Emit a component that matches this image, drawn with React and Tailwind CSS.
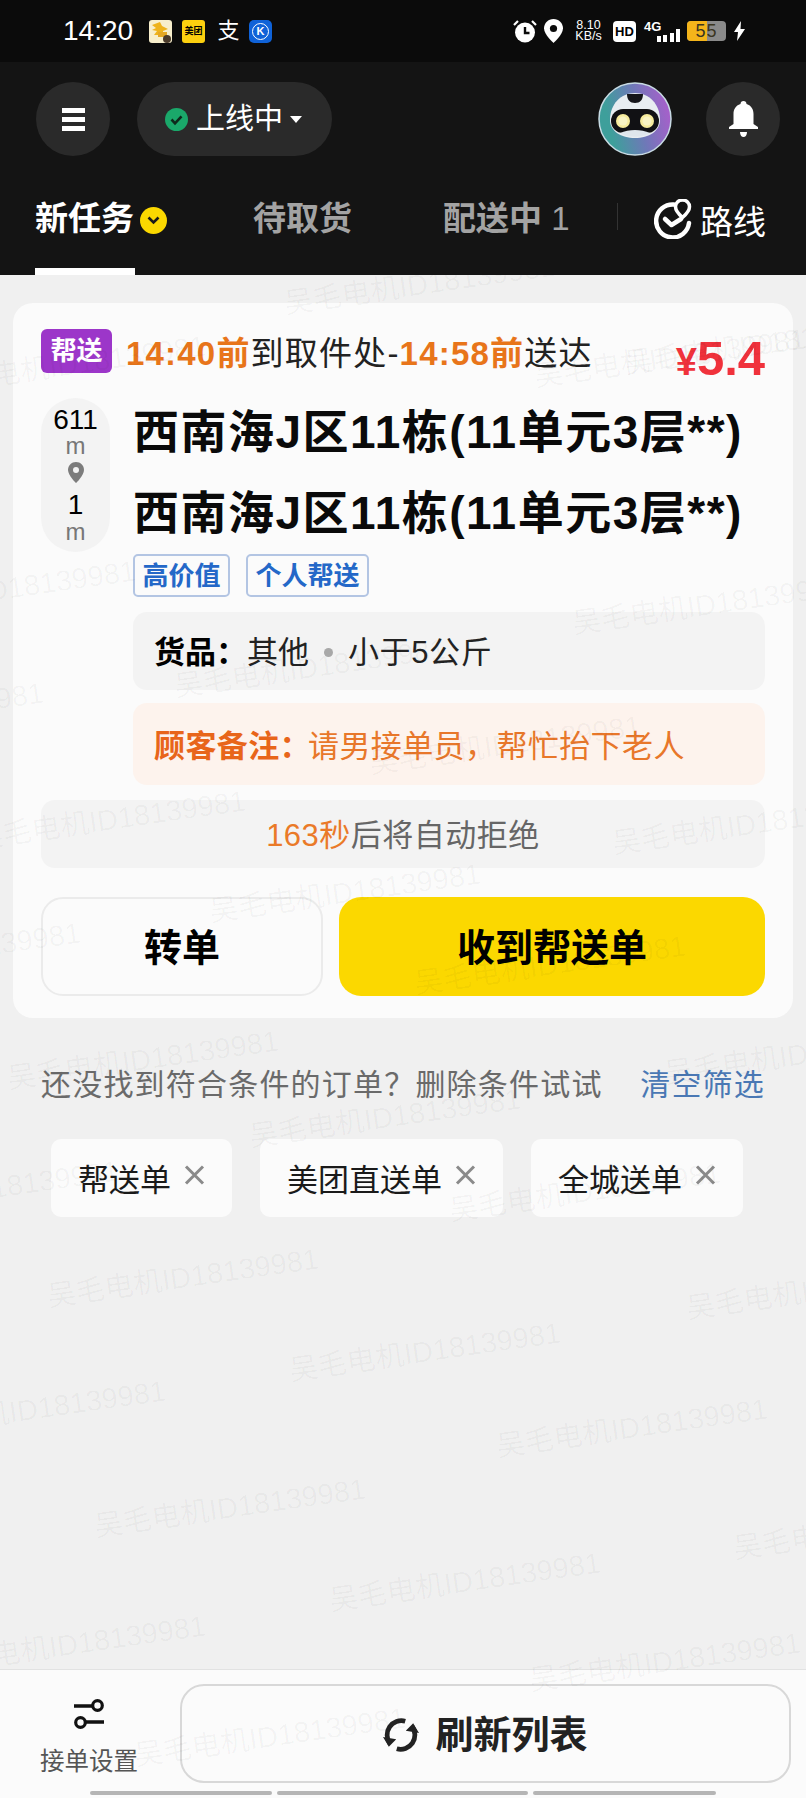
import { Fragment } from 'react'

const WATERMARKS = [
  [420, 285], [670, 358], [70, 365], [760, 345], [708, 605], [0, 590], [310, 668], [505, 745],
  [-92, 712], [110, 820], [748, 825], [345, 893], [-55, 952], [550, 965], [143, 1060], [385, 1118],
  [800, 1055], [585, 1192], [-17, 1190], [183, 1278], [425, 1352], [822, 1290], [632, 1428], [230, 1508],
  [30, 1410], [465, 1582], [869, 1530], [70, 1645], [665, 1662], [270, 1737],
]

function Watermarks() {
  return (
    <div className="absolute inset-x-0 top-[275px] bottom-0 overflow-hidden pointer-events-none">
      {WATERMARKS.map(([x, y]) => (
        <span
          key={`${x}-${y}`}
          className="absolute -translate-x-1/2 -translate-y-1/2 -rotate-[8deg] whitespace-nowrap text-[29px] leading-none text-black/[0.035]"
          style={{ left: x, top: y - 275 }}
        >
          吴毛电机ID18139981
        </span>
      ))}
    </div>
  )
}

function StatusBar() {
  return (
    <div className="flex h-[62px] shrink-0 items-center bg-[#0b0b0b] pl-[63px] text-white">
      <span className="w-[86px] text-[28px] leading-none font-light">14:20</span>
      {/* app notifications */}
      <svg width="23" height="23" viewBox="0 0 23 23" className="mr-[10px]">
        <rect width="23" height="23" rx="3" fill="#f7eecb" />
        <path d="M3 5l8-3 2 4 6 3-5 2v4H5l3-4-5-1 4-2z" fill="#eeb31c" />
        <rect x="9" y="12" width="9" height="5" fill="#e5a824" />
        <circle cx="18" cy="19" r="4" fill="#4a3a2a" />
      </svg>
      <span className="mr-[12px] flex h-[23px] w-[23px] items-center justify-center rounded-[3px] bg-[#fcd00f] text-[9px] leading-none font-bold text-black">美团</span>
      <span className="mr-[9px] w-[23px] text-center text-[22px] leading-none">支</span>
      <span className="flex h-[23px] w-[23px] items-center justify-center rounded-[5px] bg-[#0f62d8]">
        <span className="flex h-[17px] w-[17px] items-center justify-center rounded-full border border-white text-[11px] leading-none font-bold">K</span>
      </span>

      <div className="ml-[241px] flex items-center">
        <svg width="24" height="24" viewBox="0 0 24 24" className="mr-[7px]">
          <circle cx="12" cy="13.5" r="10" fill="#fff" />
          <path d="M12 8v6h4.5" fill="none" stroke="#0b0b0b" strokeWidth="2.4" />
          <path d="M1 6l4-4M23 6l-4-4" stroke="#fff" strokeWidth="2.2" />
        </svg>
        <svg width="19" height="24" viewBox="0 0 19 24" className="mr-[12px]">
          <path d="M9.5 0C4.2 0 0 4.1 0 9.3 0 15.5 9.5 24 9.5 24S19 15.5 19 9.3C19 4.1 14.8 0 9.5 0z" fill="#fff" />
          <circle cx="9.5" cy="9.5" r="3.6" fill="#0b0b0b" />
        </svg>
        <div className="mr-[11px] flex w-[27px] flex-col items-center text-[12.5px] leading-[11px]">
          <span>8.10</span>
          <span>KB/s</span>
        </div>
        <span className="mr-[8px] flex h-[21px] w-[23px] items-center justify-center rounded-[4px] bg-white text-[13px] leading-none font-bold text-black">HD</span>
        <div className="relative mr-[7px] h-[22px] w-[36px]">
          <span className="absolute top-0 left-0 text-[13px] leading-none font-bold">4G</span>
          <div className="absolute right-0 bottom-0 flex items-end gap-[2.5px]">
            <span className="h-[6px] w-[4px] bg-white" />
            <span className="h-[7px] w-[4px] bg-white" />
            <span className="h-[9px] w-[4px] bg-white" />
            <span className="h-[13px] w-[4px] bg-white" />
          </div>
        </div>
        <div className="relative mr-[8px] flex h-[20px] w-[39px] overflow-hidden rounded-[4px] bg-[#8a8a8a]">
          <span className="w-[20px] bg-[#f4b41a]" />
          <span className="absolute inset-0 text-center text-[18px] leading-[20px] tracking-[1px] text-[#3b3520]">55</span>
        </div>
        <svg width="11" height="20" viewBox="0 0 11 20">
          <path d="M7 0L0 11h4l-1 9 8-12H6.5z" fill="#fff" />
        </svg>
      </div>
    </div>
  )
}

function RobotAvatar() {
  return (
    <svg width="74" height="74" viewBox="0 0 74 74">
      <defs>
        <linearGradient id="robotBg" x1="0.1" y1="0.4" x2="0.95" y2="0.2">
          <stop offset="0" stopColor="#3e9f9b" />
          <stop offset="0.5" stopColor="#6f78b8" />
          <stop offset="1" stopColor="#a85fcb" />
        </linearGradient>
      </defs>
      <circle cx="37" cy="37" r="36" fill="url(#robotBg)" stroke="#c8dbe4" strokeWidth="1.5" />
      <path d="M12 38c0-16 11-27 25-27s25 11 25 27c0 11-11 18-25 18S12 49 12 38z" fill="#e8edf1" />
      <path d="M29 12h16c0 6-3 9-8 9s-8-3-8-9z" fill="#15151a" />
      <rect x="13" y="27" width="48" height="24" rx="12" fill="#111114" />
      <circle cx="25" cy="39" r="7" fill="#f6eb9c" />
      <circle cx="25" cy="39" r="4.5" fill="#f9f4c4" />
      <circle cx="49" cy="39" r="7" fill="#f6eb9c" />
      <circle cx="49" cy="39" r="4.5" fill="#f9f4c4" />
      <path d="M22 51c9-4 21-4 30 0-8 5-22 5-30 0z" fill="#dfe6ec" />
    </svg>
  )
}

function TopBar() {
  return (
    <div className="flex items-center pt-[20px] pr-[26px] pl-[36px]">
      <button className="flex h-[74px] w-[74px] flex-col items-center justify-center gap-[4px] rounded-full bg-[#2a2a2a]">
        <span className="h-[5px] w-[23px] bg-white" />
        <span className="h-[5px] w-[23px] bg-white" />
        <span className="h-[5px] w-[23px] bg-white" />
      </button>
      <div className="ml-[27px] flex h-[74px] w-[195px] items-center rounded-full bg-[#2a2a2a] pl-[28px]">
        <svg width="23" height="23" viewBox="0 0 23 23">
          <circle cx="11.5" cy="11.5" r="11.5" fill="#1aa86a" />
          <path d="M6.5 11.5l3.5 3.8 6.5-7" fill="none" stroke="#0e2a1c" strokeWidth="2.6" />
        </svg>
        <span className="ml-[8px] text-[29px] leading-none text-white">上线中</span>
        <span className="ml-[7px] h-0 w-0 border-x-[6.5px] border-t-[7px] border-x-transparent border-t-white" />
      </div>
      <div className="ml-auto">
        <RobotAvatar />
      </div>
      <button className="ml-[34px] flex h-[74px] w-[74px] items-center justify-center rounded-full bg-[#2a2a2a]">
        <svg width="29" height="36" viewBox="0 0 29 36">
          <path d="M14.5 0c1.8 0 3 1.2 3 3 5 1.5 7 5.5 7 10v10l4.5 3v2H0v-2l4.5-3V13c0-4.5 2-8.5 7-10 0-1.8 1.2-3 3-3z" fill="#fff" />
          <path d="M11 31h7c0 3-1.5 5-3.5 5S11 34 11 31z" fill="#fff" />
        </svg>
      </button>
    </div>
  )
}

function Tabs() {
  return (
    <div className="flex h-[119px] items-start pt-[40px] pl-[35px]">
      <div className="relative flex h-[79px] items-start">
        <span className="w-[100px] text-[33px] leading-[46px] font-bold text-white">新任务</span>
        <span className="absolute top-[11px] left-[105px] flex h-[27px] w-[27px] items-center justify-center rounded-full bg-[#fbd800]">
          <svg width="13" height="9" viewBox="0 0 13 9">
            <path d="M1.5 1.5l5 5 5-5" fill="none" stroke="#1a1a1a" strokeWidth="2.6" />
          </svg>
        </span>
        <span className="absolute bottom-0 left-0 h-[7px] w-[100px] bg-white" />
      </div>
      <span className="ml-[118px] w-[100px] text-[33px] leading-[46px] font-bold text-[#a3a3a3]">待取货</span>
      <span className="ml-[90px] w-[130px] text-[33px] leading-[46px] font-bold text-[#a3a3a3]">
        配送中 <span className="font-normal">1</span>
      </span>
      <span className="mt-[7px] ml-[44px] h-[27px] w-px bg-[#333333]" />
      <svg width="38" height="40" viewBox="0 0 38 40" className="mt-[3px] ml-[36px]">
        <path d="M20 5.5A16.5 16.5 0 1 0 35 24" fill="none" stroke="#fff" strokeWidth="4.5" strokeLinecap="round" />
        <path d="M11 20l6.5 6 9.5-6" fill="none" stroke="#fff" strokeWidth="4.5" strokeLinecap="round" strokeLinejoin="round" />
        <path d="M28.5 1c-4 0-7 3-7 6.8 0 4.6 7 10.7 7 10.7s7-6.1 7-10.7c0-3.8-3-6.8-7-6.8z" fill="#141414" stroke="#fff" strokeWidth="3.5" />
      </svg>
      <span className="mt-[4px] ml-[8px] text-[33px] leading-[46px] text-white">路线</span>
    </div>
  )
}

function DistancePill() {
  return (
    <div className="flex h-[154px] w-[69px] shrink-0 flex-col items-center rounded-full bg-[#f3f3f3] pt-[8px] text-[#777777]">
      <span className="text-[28px] leading-[28px] font-medium text-black">611</span>
      <span className="text-[24px] leading-[24px]">m</span>
      <svg width="16" height="21" viewBox="0 0 16 21" className="mt-[4px]">
        <path d="M8 0C3.6 0 0 3.5 0 7.9 0 13.3 8 21 8 21s8-7.7 8-13.1C16 3.5 12.4 0 8 0z" fill="#7c7c7c" />
        <circle cx="8" cy="8" r="3" fill="#f3f3f3" />
      </svg>
      <span className="mt-[7px] text-[28px] leading-[30px] font-medium text-black">1</span>
      <span className="text-[24px] leading-[24px]">m</span>
    </div>
  )
}

function Address() {
  return (
    <div className="h-[68px] text-[46px] leading-[68px] font-bold tracking-[1.5px] whitespace-nowrap text-[#0a0a0a]">
      西南海J区11栋(11单元3层**)
    </div>
  )
}

function OrderCard() {
  return (
    <div className="mx-[13px] rounded-[20px] bg-[#fbfbfb] px-[28px] pt-[26px] pb-[22px]">
      <div className="flex h-[44px] items-center">
        <span className="flex h-[44px] w-[71px] items-center justify-center rounded-[6px] bg-[#9c36c9] text-[26px] leading-none font-bold text-white">帮送</span>
        <div className="mt-[6px] ml-[14px] text-[33px] leading-[44px] tracking-[1.2px] whitespace-nowrap text-[#222222]">
          <span className="font-bold text-[#e8751a]">14:40前</span>
          到取件处-
          <span className="font-bold text-[#e8751a]">14:58前</span>
          送达
        </div>
        <div className="mt-[14px] ml-auto leading-none font-bold whitespace-nowrap text-[#f0323c]">
          <span className="text-[38px]">¥</span>
          <span className="text-[49px]">5.4</span>
        </div>
      </div>

      <div className="mt-[25px] flex">
        <DistancePill />
        <div className="ml-[23px] flex min-w-0 flex-1 flex-col">
          <Address />
          <div className="mt-[13px]">
            <Address />
          </div>
          <div className="mt-[7px] flex gap-[16px]">
            <span className="flex h-[43px] w-[97px] items-center justify-center rounded-[5px] border-2 border-[#b3c5e3] text-[26px] leading-none font-bold text-[#2468c8]">高价值</span>
            <span className="flex h-[43px] w-[123px] items-center justify-center rounded-[5px] border-2 border-[#b3c5e3] text-[26px] leading-none font-bold text-[#2468c8]">个人帮送</span>
          </div>
          <div className="mt-[15px] flex h-[78px] items-center rounded-[14px] bg-[#f3f3f3] pt-[2px] pl-[21px] text-[31px] leading-none text-[#222222]">
            <span className="font-bold text-black">货品：</span>
            <span>其他</span>
            <span className="mx-[15px] h-[9px] w-[9px] rounded-full bg-[#a8a8a8]" />
            <span className="tracking-[0.6px]">小于5公斤</span>
          </div>
          <div className="mt-[13px] flex h-[82px] items-center rounded-[14px] bg-[#fdf3ed] pt-[4px] pl-[21px] text-[31px] leading-none tracking-[0.4px] whitespace-nowrap text-[#e8772a]">
            <span className="font-bold text-[#e8651a]">顾客备注：</span>
            <span className="-ml-[3px]">请男接单员，帮忙抬下老人</span>
          </div>
        </div>
      </div>

      <div className="mt-[15px] flex h-[68px] items-center justify-center rounded-[14px] bg-[#f3f3f3] pt-[2px] text-[31px] leading-none tracking-[0.5px] text-[#666666]">
        <span className="text-[#ea7a28]">163秒</span>
        后将自动拒绝
      </div>

      <div className="mt-[29px] flex gap-[16px]">
        <button className="flex h-[99px] w-[282px] items-center justify-center rounded-[22px] border-2 border-[#ebebeb] bg-[#fbfbfb] pt-[2px] text-[38px] leading-none font-bold text-black">转单</button>
        <button className="flex h-[99px] flex-1 items-center justify-center rounded-[22px] bg-[#fbd800] pt-[2px] text-[38px] leading-none font-bold text-black">收到帮送单</button>
      </div>
    </div>
  )
}

function FilterChip({ label }) {
  return (
    <div className="flex h-[78px] items-center rounded-[10px] bg-[#fbfbfb] pt-[4px] pr-[27px] pl-[27px] text-[31px] leading-none whitespace-nowrap text-[#1a1a1a]">
      {label}
      <svg width="21" height="20" viewBox="0 0 21 20" className="-mt-[10px] ml-[13px]">
        <path d="M2 1.5l17 17M19 1.5l-17 17" stroke="#8a8a8a" strokeWidth="3" />
      </svg>
    </div>
  )
}

function EmptyFilters() {
  return (
    <Fragment>
      <div className="mx-[41px] mt-[46px] flex items-center justify-between text-[30px] leading-[42px] tracking-[1.2px]">
        <span className="text-[#6a6a6a]">还没找到符合条件的订单？删除条件试试</span>
        <span className="text-[#4a78b4]">清空筛选</span>
      </div>
      <div className="mt-[33px] ml-[51px] flex gap-[28px]">
        <FilterChip label="帮送单" />
        <FilterChip label="美团直送单" />
        <FilterChip label="全城送单" />
      </div>
    </Fragment>
  )
}

function BottomBar() {
  return (
    <div className="shrink-0 border-t border-[#e2e2e2] bg-[#fbfbfb] pt-[14px]">
      <div className="flex pr-[15px]">
        <div className="flex w-[180px] flex-col items-center pt-[15px] pr-[2px]">
          <svg width="30" height="30" viewBox="0 0 30 30">
            <path d="M0 7h19M30 23H11" stroke="#111" strokeWidth="3.6" />
            <circle cx="23.5" cy="6.5" r="4.8" fill="none" stroke="#111" strokeWidth="3.2" />
            <circle cx="6.5" cy="23.5" r="4.8" fill="none" stroke="#111" strokeWidth="3.2" />
          </svg>
          <span className="mt-[21px] text-[24.5px] leading-none whitespace-nowrap text-[#555555]">接单设置</span>
        </div>
        <button className="flex h-[99px] flex-1 items-center justify-center rounded-[24px] border-2 border-[#d8d8d8] pt-[2px]">
          <svg width="36" height="36" viewBox="0 0 34 34">
            <path d="M6.5 25A13.5 13.5 0 0 1 21 4" fill="none" stroke="#222" strokeWidth="4.5" />
            <path d="M27.5 9A13.5 13.5 0 0 1 13 30" fill="none" stroke="#222" strokeWidth="4.5" />
            <path d="M0 19l5.5 9 7-7zM34 15l-5.5-9-7 7z" fill="#222" />
          </svg>
          <span className="ml-[16px] text-[38px] leading-none font-bold text-[#222222]">刷新列表</span>
        </button>
      </div>
      <div className="mt-[8px] mb-[3px] ml-[90px] flex gap-[5px]">
        <span className="h-[4px] w-[182px] rounded-full bg-[#b5b5b5]" />
        <span className="h-[4px] w-[251px] rounded-full bg-[#b5b5b5]" />
        <span className="h-[4px] w-[183px] rounded-full bg-[#b5b5b5]" />
      </div>
    </div>
  )
}

export default function App() {
  return (
    <div className="relative flex h-[1798px] w-[806px] flex-col overflow-hidden bg-[#f0f0f0] font-['Liberation_Sans','Noto_Sans_CJK_SC',sans-serif]">
      <StatusBar />
      <div className="h-[213px] shrink-0 bg-[#141414]">
        <TopBar />
        <Tabs />
      </div>
      <div className="flex-1 pt-[28px]">
        <OrderCard />
        <EmptyFilters />
      </div>
      <BottomBar />
      <Watermarks />
    </div>
  )
}
